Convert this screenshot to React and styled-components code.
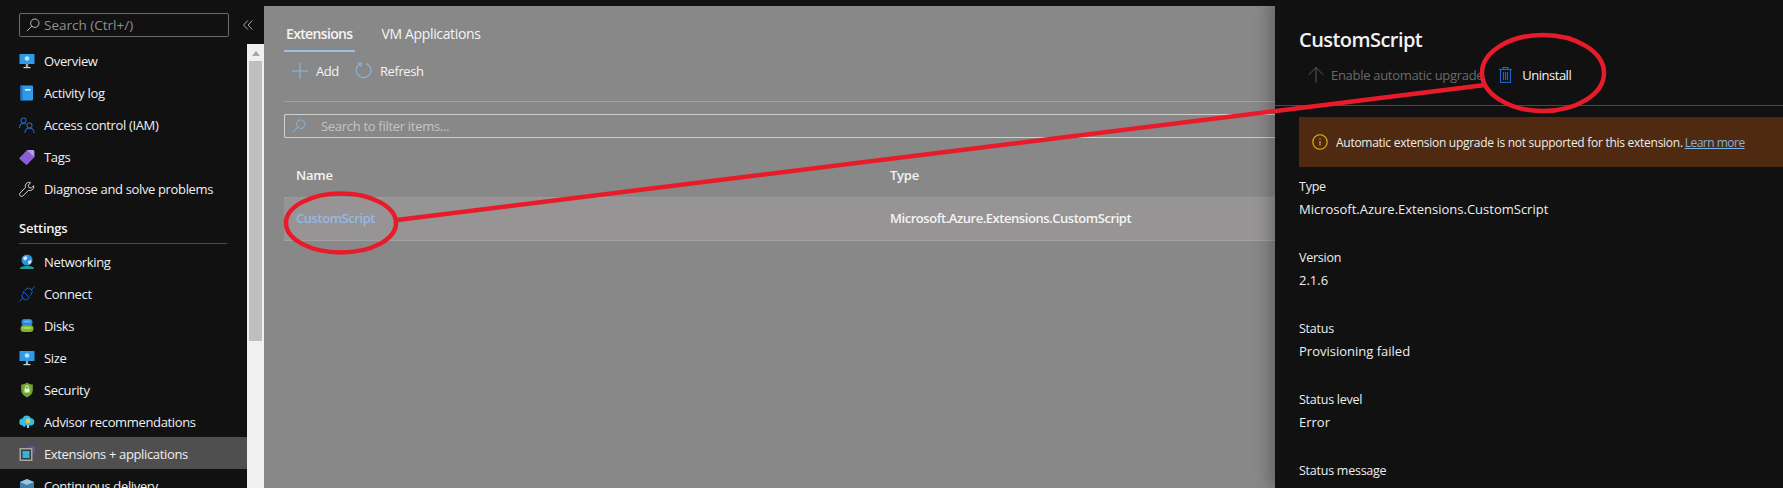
import React from 'react';
import styled, { createGlobalStyle } from 'styled-components';

const GlobalStyle = createGlobalStyle`
    html, body {
        margin: 0;
        padding: 0;
        background: #111112;
    }

    body {
        width: 1783px;
        height: 488px;
        overflow: hidden;
        font-family: "Open Sans", "Liberation Sans", sans-serif;
        font-size: 13px;
        letter-spacing: -0.25px;
    }
`;

const MonitorIcon = () => (
    <svg width="16" height="16" viewBox="0 0 16 16">
        <rect x="0.5" y="1" width="15" height="10" rx="0.6" fill="#2f9be8" />
        <path d="M8 3l2.2 1.2v2.6L8 8 5.8 6.8V4.200z" fill="#b5e3fb" />
        <rect x="6.800" y="11" width="2.400" height="3" fill="#a8a8a8" />
        <rect x="4.500" y="14" width="7" height="1.200" fill="#d0d0d0" />
    </svg>
);

const BookIcon = () => (
    <svg width="16" height="16" viewBox="0 0 16 16">
        <rect x="1.500" y="0.500" width="12.500" height="15" rx="1" fill="#2f9be8" />
        <rect x="1.500" y="0.500" width="2" height="15" fill="#1f6fc0" />
        <rect x="6" y="4" width="5.500" height="1.600" fill="#e9f4fc" />
    </svg>
);

const PeopleIcon = () => (
    <svg width="16" height="17" viewBox="0 0 16 17" fill="none" stroke="#1d66c4" strokeWidth="1.100">
        <circle cx="4.500" cy="3.500" r="2.500" />
        <path d="M0.500 11c0-3 1.500-4.500 4-4.500 1 0 1.700.2 2.300.6" />
        <circle cx="10.500" cy="8.500" r="2.500" />
        <path d="M6 16c0-3 1.800-4.700 4.500-4.700S15 13 15 16" />
    </svg>
);

const TagIcon = () => (
    <svg width="16" height="16" viewBox="0 0 16 16">
        <path d="M0.800 8.500L8 1h5.500c1 0 1.800.7 1.800 1.600v5.600l-6.800 7a1.400 1.400 0 0 1-2 0L.8 10.300a1.300 1.300 0 0 1 0-1.800z" fill="#8a5fd6" />
        <path d="M8 1h5.500c1 0 1.800.7 1.800 1.600v5.600z" fill="#b79ae8" />
    </svg>
);

const WrenchIcon = () => (
    <svg width="16" height="16" viewBox="0 0 16 16" fill="none" stroke="#e8e8e8" strokeWidth="0.900">
        <path d="M10 1.200a4 4 0 0 0-3.500 5.300L1 12.200a2 2 0 0 0 2.800 2.800l5.700-5.600a4 4 0 0 0 5.200-4.700l-2.500 2.400-2.300-.6-.6-2.300 2.300-2.400A4 4 0 0 0 10 1.200z" />
    </svg>
);

const GlobeIcon = () => (
    <svg width="16" height="16" viewBox="0 0 16 16">
        <path d="M1 15c0-2 1.800-3 7-3s7 1 7 3z" fill="#1f9e8f" />
        <circle cx="8" cy="6" r="5.500" fill="#2f8fe0" />
        <path d="M4 3.500l3-1.500 1.500 2-2 2.500L5 6zM9 7l3.500-1-.5 3-2.500 1.500z" fill="#d7eefc" />
    </svg>
);

const PlugIcon = () => (
    <svg width="16" height="16" viewBox="0 0 16 16" fill="none" stroke="#1d5fc0" strokeWidth="1">
        <path d="M0.500 15.500l3.500-3.500M12 4l3.500-3.500" />
        <path d="M4.500 5.500l6 6-1.500 1.200a3.500 3.500 0 0 1-5-.2 3.500 3.500 0 0 1 0-5z" />
        <path d="M5.500 4.500l1.500-1.300a3.500 3.500 0 0 1 5 0 3.500 3.500 0 0 1 .2 5l-1.200 1.300" />
    </svg>
);

const DisksIcon = () => (
    <svg width="16" height="16" viewBox="0 0 16 16">
        <rect x="1.500" y="7" width="13" height="7" rx="3.500" fill="#7db52e" />
        <ellipse cx="8" cy="10" rx="4.500" ry="1.200" fill="#a9d15c" />
        <rect x="2.500" y="1" width="11" height="6.500" rx="3.200" fill="#2c87dc" />
        <ellipse cx="8" cy="3.500" rx="3.800" ry="1" fill="#6cb6ee" />
    </svg>
);

const ShieldIcon = () => (
    <svg width="16" height="16" viewBox="0 0 16 16">
        <path d="M8 0.500c2 1.500 3.500 2 5.800 2v5.500c0 3.500-2.500 5.800-5.800 7.500-3.300-1.700-5.800-4-5.800-7.500V2.500C4.500 2.500 6 2 8 .5z" fill="#6fa82e" />
        <rect x="5.500" y="6.500" width="5" height="4" rx="0.500" fill="#e9f3da" />
        <path d="M6.500 6.500V5.200a1.500 1.500 0 0 1 3 0v1.300" fill="none" stroke="#e9f3da" strokeWidth="0.900" />
    </svg>
);

const CloudIcon = () => (
    <svg width="16" height="16" viewBox="0 0 16 16">
        <path d="M4 11.500a3.500 3.500 0 0 1-.4-7A4.500 4.500 0 0 1 12 4.200a3.700 3.700 0 0 1 .3 7.300z" fill="#36bde6" />
        <circle cx="9" cy="7" r="2.400" fill="#e8c640" />
        <rect x="8" y="11" width="2" height="3" fill="#7fd7f2" />
        <rect x="4.500" y="11" width="1.200" height="2" fill="#7fd7f2" />
    </svg>
);

const ExtensionIcon = () => (
    <svg width="16" height="16" viewBox="0 0 16 16">
        <rect x="0.500" y="2" width="13" height="13" fill="#a6a6a6" />
        <rect x="2" y="3.500" width="10" height="10" fill="#3a3a3a" />
        <rect x="3.500" y="5" width="7" height="7" fill="#2fb4dc" />
        <path d="M9 1h6v6" fill="none" stroke="#7d4fd0" strokeWidth="1.200" />
    </svg>
);

const BoxIcon = () => (
    <svg width="16" height="16" viewBox="0 0 16 16">
        <path d="M1 4l7-3 7 3v9l-7 3-7-3z" fill="#3f7fae" />
        <path d="M1 4l7 3 7-3-7-3z" fill="#9cc4dc" />
    </svg>
);

const SearchIcon = ({ color = '#bdbdbd' }) => (
    <svg width="14" height="14" viewBox="0 0 14 14" fill="none" stroke={color} strokeWidth="1">
        <circle cx="8.800" cy="5.200" r="4.200" />
        <path d="M5.800 8.200L0.800 13.200" />
    </svg>
);

const ChevronsIcon = () => (
    <svg width="10" height="10" viewBox="0 0 10 10" fill="none" stroke="#a8a8a8" strokeWidth="1">
        <path d="M4.800 0.500L0.500 5l4.300 4.500M9.300 0.500L5 5l4.300 4.500" />
    </svg>
);

const PlusIcon = () => (
    <svg width="16" height="16" viewBox="0 0 16 16" stroke="#8db5de" strokeWidth="1.100">
        <path d="M8 0v16M0 8h16" />
    </svg>
);

const RefreshIcon = () => (
    <svg width="17" height="17" viewBox="0 0 17 17" fill="none" stroke="#8db5de" strokeWidth="1.100">
        <path d="M6 1.500A7.300 7.300 0 1 0 11 1.400" />
        <path d="M2.800 0.800l3.400.6-.4 3.400" />
    </svg>
);

const ArrowUpIcon = () => (
    <svg width="16" height="16" viewBox="0 0 16 16" fill="none" stroke="#5a5a5a" strokeWidth="1">
        <path d="M8 0.500v15M0.800 7.800L8 0.500l7.200 7.300" />
    </svg>
);

const TrashIcon = () => (
    <svg width="13" height="16" viewBox="0 0 13 16" fill="none" stroke="#1a66cf" strokeWidth="1.100">
        <path d="M0 2.500h13M4 2.500V0.600h5v1.900" />
        <rect x="1.500" y="2.500" width="10" height="13" />
        <path d="M4.500 5v8M6.500 5v8M8.500 5v8" />
    </svg>
);

const InfoIcon = () => (
    <svg width="16" height="16" viewBox="0 0 16 16" fill="none" stroke="#e8b90f" strokeWidth="1.100">
        <circle cx="8" cy="8" r="7.200" />
        <path d="M8 7v4.500M8 4.200v1.400" />
    </svg>
);

const topItems = [
    { icon: <MonitorIcon />, label: 'Overview' },
    { icon: <BookIcon />, label: 'Activity log' },
    { icon: <PeopleIcon />, label: 'Access control (IAM)' },
    { icon: <TagIcon />, label: 'Tags' },
    { icon: <WrenchIcon />, label: 'Diagnose and solve problems' },
];

const settingsItems = [
    { icon: <GlobeIcon />, label: 'Networking' },
    { icon: <PlugIcon />, label: 'Connect' },
    { icon: <DisksIcon />, label: 'Disks' },
    { icon: <MonitorIcon />, label: 'Size' },
    { icon: <ShieldIcon />, label: 'Security' },
    { icon: <CloudIcon />, label: 'Advisor recommendations' },
    { icon: <ExtensionIcon />, label: 'Extensions + applications', active: true },
    { icon: <BoxIcon />, label: 'Continuous delivery' },
];

const fields = [
    { label: 'Type', value: 'Microsoft.Azure.Extensions.CustomScript' },
    { label: 'Version', value: '2.1.6' },
    { label: 'Status', value: 'Provisioning failed' },
    { label: 'Status level', value: 'Error' },
    { label: 'Status message' },
];

function App() {
    return (
        <Page>
            <GlobalStyle />
            <Sidebar>
                <SearchRow>
                    <SideSearch>
                        <SearchIcon />
                        <span>Search (Ctrl+/)</span>
                    </SideSearch>
                    <Collapse><ChevronsIcon /></Collapse>
                </SearchRow>
                <SideBody>
                    <Nav>
                        {topItems.map((item) => (
                            <NavItem key={item.label}>
                                <NavIcon>{item.icon}</NavIcon>
                                {item.label}
                            </NavItem>
                        ))}
                        <SectionTitle>Settings</SectionTitle>
                        {settingsItems.map((item) => (
                            <SettingsItem key={item.label} $active={item.active}>
                                <NavIcon>{item.icon}</NavIcon>
                                {item.label}
                            </SettingsItem>
                        ))}
                    </Nav>
                    <Scrollbar>
                        <ScrollArrow />
                        <ScrollThumb />
                    </Scrollbar>
                </SideBody>
            </Sidebar>

            <Main>
                <Tabs>
                    <Tab $active>Extensions</Tab>
                    <Tab>VM Applications</Tab>
                </Tabs>
                <Toolbar>
                    <ToolButton><PlusIcon />Add</ToolButton>
                    <ToolButton><RefreshIcon />Refresh</ToolButton>
                </Toolbar>
                <FilterBox>
                    <SearchIcon color="#8db5de" />
                    <span>Search to filter items...</span>
                </FilterBox>
                <HeaderRow>
                    <NameCell>Name</NameCell>
                    <span>Type</span>
                </HeaderRow>
                <DataRow>
                    <NameCell $link>CustomScript</NameCell>
                    <span>Microsoft.Azure.Extensions.CustomScript</span>
                </DataRow>
            </Main>

            <Panel>
                <PanelTitle>CustomScript</PanelTitle>
                <PanelToolbar>
                    <PanelAction $disabled><ArrowUpIcon />Enable automatic upgrade</PanelAction>
                    <PanelAction><TrashIcon />Uninstall</PanelAction>
                </PanelToolbar>
                <Banner>
                    <InfoIcon />
                    <span>Automatic extension upgrade is not supported for this extension. <BannerLink>Learn more</BannerLink></span>
                </Banner>
                {fields.map((field) => (
                    <Field key={field.label}>
                        <FieldLabel>{field.label}</FieldLabel>
                        {field.value && <FieldValue>{field.value}</FieldValue>}
                    </Field>
                ))}
            </Panel>

            <Annotations width="1783" height="488" viewBox="0 0 1783 488" fill="none" stroke="#e81b2b" strokeWidth="4.500">
                <ellipse cx="341" cy="223" rx="55" ry="29.500" />
                <path d="M397 220L1485 85" />
                <ellipse cx="1543" cy="73" rx="61" ry="38" />
            </Annotations>
        </Page>
    );
}

export default App;

const Page = styled.div`
    position: relative;
    display: flex;
    width: 1783px;
    height: 488px;
    overflow: hidden;
    background: #111112;
`;

const Sidebar = styled.aside`
    display: flex;
    flex-direction: column;
    flex: 0 0 264px;
    color: #f0f0f0;
`;

const SearchRow = styled.div`
    display: flex;
    align-items: flex-start;
    height: 44px;
    box-sizing: border-box;
    padding: 13px 0 0 19px;
`;

const SideSearch = styled.div`
    display: flex;
    align-items: center;
    gap: 4px;
    width: 210px;
    height: 24px;
    box-sizing: border-box;
    padding: 0 6px;
    border: 1px solid #6b6b6b;
    border-radius: 2px;
    color: #8f8f8f;
    font-size: 13.500px;
    letter-spacing: 0;
`;

const Collapse = styled.div`
    display: flex;
    margin: 7px 0 0 14px;
`;

const SideBody = styled.div`
    display: flex;
    flex: 1;
    min-height: 0;
`;

const Nav = styled.nav`
    flex: 0 0 247px;
    padding-top: 1px;
`;

const NavItem = styled.div`
    display: flex;
    align-items: center;
    height: 32px;
    box-sizing: border-box;
    padding-left: 19px;
    white-space: nowrap;
    letter-spacing: -0.35px;
    background: ${({ $active }) => ($active ? '#4f4f4f' : 'transparent')};
`;

const SettingsItem = styled(NavItem)`
    padding-top: 2px;
`;

const NavIcon = styled.span`
    display: flex;
    flex: 0 0 25px;
`;

const SectionTitle = styled.div`
    display: flex;
    align-items: center;
    height: 39px;
    box-sizing: border-box;
    margin: 0 20px 1px 19px;
    padding-top: 8px;
    border-bottom: 1px solid #4a4a4a;
    font-weight: 600;
`;

const Scrollbar = styled.div`
    flex: 0 0 17px;
    background: #f0f0f0;
`;

const ScrollArrow = styled.div`
    width: 0;
    height: 0;
    margin: 7px auto 5px;
    border: 4px solid transparent;
    border-top: 0;
    border-bottom: 5px solid #a6a6a6;
`;

const ScrollThumb = styled.div`
    height: 280px;
    margin: 0 2px;
    background: #bfbfbf;
`;

const Main = styled.main`
    flex: 1;
    min-width: 0;
    margin-top: 6px;
    padding: 0 0 0 20px;
    background: #888888;
    color: #f4f4f4;
`;

const Tabs = styled.div`
    display: flex;
    gap: 25px;
    height: 46px;
    align-items: flex-end;
    font-size: 14px;
`;

const Tab = styled.div`
    box-sizing: border-box;
    height: 36px;
    padding: 8px 2px 0;
    border-bottom: 2px solid ${({ $active }) => ($active ? '#9dbfe0' : 'transparent')};
    font-weight: ${({ $active }) => ($active ? 600 : 400)};
    letter-spacing: ${({ $active }) => ($active ? '-0.65px' : '-0.35px')};
`;

const Toolbar = styled.div`
    display: flex;
    align-items: center;
    gap: 16px;
    height: 50px;
    box-sizing: border-box;
    padding: 0 0 12px 8px;
    border-bottom: 1px solid #a3a3a3;
    letter-spacing: -0.4px;
`;

const ToolButton = styled.div`
    display: flex;
    align-items: center;
    gap: 8px;
`;

const FilterBox = styled.div`
    display: flex;
    align-items: center;
    gap: 15px;
    height: 24px;
    box-sizing: border-box;
    margin-top: 12px;
    padding-left: 7px;
    border: 1px solid #cfcfcf;
    border-right: 0;
    border-radius: 2px 0 0 2px;
    color: #c4c4c4;
    letter-spacing: -0.3px;
`;

const HeaderRow = styled.div`
    display: grid;
    grid-template-columns: 594px 1fr;
    align-items: center;
    height: 59px;
    box-sizing: border-box;
    padding: 15px 0 0 12px;
    font-weight: 600;
`;

const DataRow = styled.div`
    display: grid;
    grid-template-columns: 594px 1fr;
    align-items: center;
    height: 44px;
    box-sizing: border-box;
    padding: 0 0 2px 12px;
    background: #969494;
    border-top: 1px solid #9c9c9c;
    border-bottom: 1px solid #a2a2a2;
    font-weight: 600;
    letter-spacing: -0.45px;
`;

const NameCell = styled.span`
    color: ${({ $link }) => ($link ? '#95b8e8' : 'inherit')};
`;

const Panel = styled.section`
    position: relative;
    flex: 0 0 508px;
    box-sizing: border-box;
    background: #111112;
    box-shadow: -6px 0 14px rgba(0, 0, 0, 0.25);
    color: #eeeeee;
`;

const PanelTitle = styled.h2`
    margin: 0;
    padding: 26px 0 0 24px;
    height: 26px;
    font-size: 20px;
    line-height: 28px;
    font-weight: 600;
    letter-spacing: -0.55px;
    color: #f2f2f2;
    box-sizing: content-box;
`;

const PanelToolbar = styled.div`
    display: flex;
    align-items: center;
    gap: 16px;
    height: 54px;
    box-sizing: border-box;
    padding: 0 0 8px 33px;
    border-bottom: 1px solid #4a4a4a;
`;

const PanelAction = styled.div`
    display: flex;
    align-items: center;
    gap: ${({ $disabled }) => ($disabled ? '7px' : '10px')};
    color: ${({ $disabled }) => ($disabled ? '#6a6a6a' : '#f4f4f4')};
    letter-spacing: ${({ $disabled }) => ($disabled ? '-0.3px' : '-0.5px')};
`;

const Banner = styled.div`
    display: flex;
    align-items: center;
    gap: 8px;
    height: 50px;
    margin: 11px 0 9px 24px;
    padding-left: 13px;
    background: #4f2a10;
    font-size: 12px;
    letter-spacing: -0.27px;
`;

const BannerLink = styled.span`
    margin-left: -1px;
    color: #7fb2e0;
    text-decoration: underline;
    letter-spacing: -0.5px;
`;

const Field = styled.div`
    height: 71px;
    padding-left: 24px;
`;

const FieldLabel = styled.div`
    height: 21px;
    line-height: 22px;
    font-size: 12.500px;
`;

const FieldValue = styled.div`
    height: 24px;
    line-height: 24px;
    letter-spacing: 0;
`;

const Annotations = styled.svg`
    position: absolute;
    inset: 0;
    pointer-events: none;
`;
